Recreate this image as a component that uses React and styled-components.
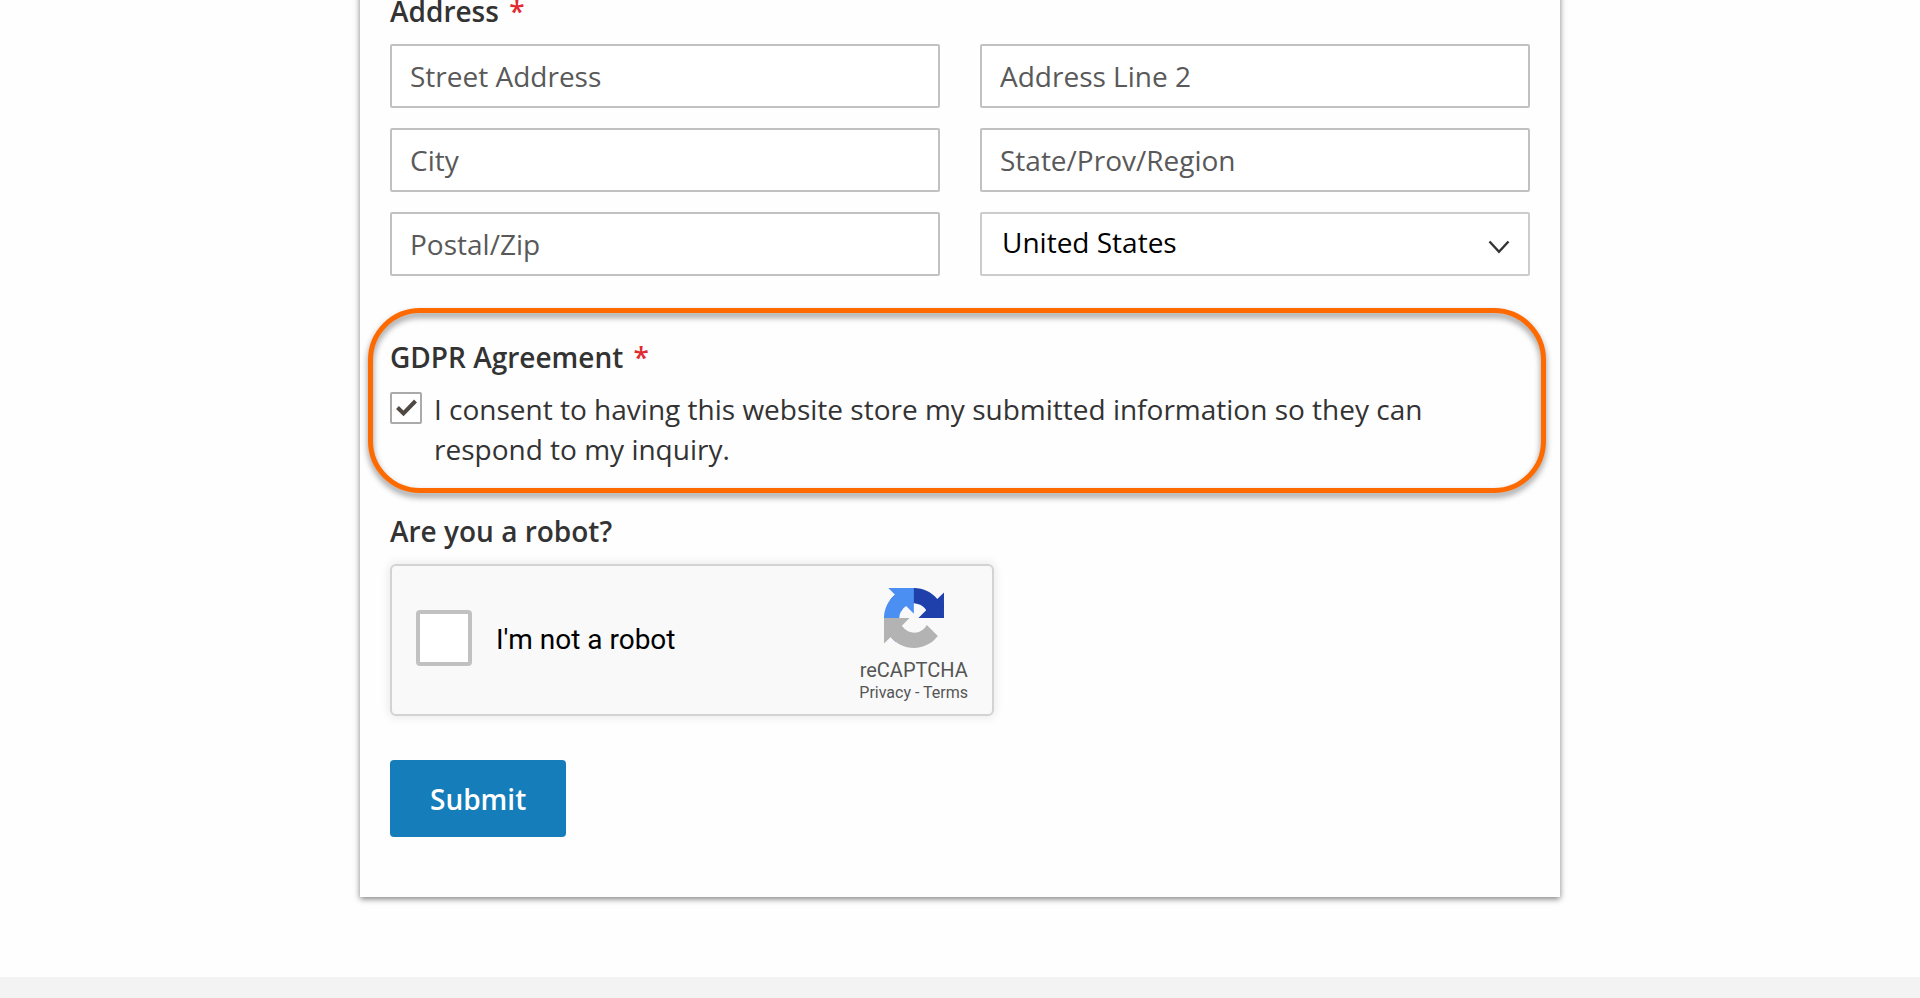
import React, { useState } from 'react';
import styled, { createGlobalStyle } from 'styled-components';

const FIELDS = [
  { name: 'street', placeholder: 'Street Address' },
  { name: 'line2', placeholder: 'Address Line 2' },
  { name: 'city', placeholder: 'City' },
  { name: 'region', placeholder: 'State/Prov/Region' },
  { name: 'zip', placeholder: 'Postal/Zip' },
];

const COUNTRIES = ['United States', 'Canada', 'United Kingdom', 'Australia'];

const AddressFields = () => {
  const [country, setCountry] = useState('United States');

  return (
    <Group>
      <Legend>
        Address <Required>*</Required>
      </Legend>
      <FieldGrid>
        {FIELDS.map(({ name, placeholder }) => (
          <TextInput
            key={name}
            type="text"
            name={name}
            placeholder={placeholder}
            aria-label={placeholder}
          />
        ))}
        <SelectWrap>
          <Select
            name="country"
            aria-label="Country"
            value={country}
            onChange={(e) => setCountry(e.target.value)}>
            {COUNTRIES.map((c) => (
              <option key={c}>{c}</option>
            ))}
          </Select>
          <Chevron viewBox="0 0 22 14" aria-hidden="true">
            <path d="M1.5 1.5 L11 11.8 L20.5 1.5" />
          </Chevron>
        </SelectWrap>
      </FieldGrid>
    </Group>
  );
};

const Consent = () => {
  const [checked, setChecked] = useState(true);

  return (
    <Callout>
      <Group>
        <Legend $gap={12}>
          GDPR Agreement <Required>*</Required>
        </Legend>
        <ConsentLabel>
          <CheckWrap>
            <Checkbox
              type="checkbox"
              name="consent"
              checked={checked}
              onChange={(e) => setChecked(e.target.checked)}
            />
            {checked && (
              <Tick viewBox="0 0 32 32" aria-hidden="true">
                <path d="M7.5 15.5 L13.5 21.5 L25.5 9" />
              </Tick>
            )}
          </CheckWrap>
          <span>
            I consent to having this website store my submitted information so
            they can respond to my inquiry.
          </span>
        </ConsentLabel>
      </Group>
    </Callout>
  );
};

const RecaptchaLogo = () => (
  <LogoSvg viewBox="0 0 64 64" aria-hidden="true">
    <path
      fill="#1f3fab"
      d="M64 31.955l-.033-1.37V4.687l-7.16 7.16C50.948 4.674 42.033.093 32.05.093c-10.4 0-19.622 4.96-25.458 12.64l11.736 11.86a15.55 15.55 0 0 1 4.754-5.334c2.05-1.6 4.952-2.906 8.968-2.906.485 0 .86.057 1.135.163 4.976.393 9.288 3.14 11.828 7.124l-8.307 8.307L64 31.953"
    />
    <path
      fill="#4c8ff3"
      d="M31.862.094l-1.37.033H4.594l7.16 7.16C4.58 13.147 0 22.06 0 32.046c0 10.4 4.96 19.622 12.64 25.458L24.5 45.768a15.55 15.55 0 0 1-5.334-4.754c-1.6-2.05-2.906-4.952-2.906-8.968 0-.485.057-.86.163-1.135.393-4.976 3.14-9.288 7.124-11.828l8.307 8.307L31.86.095"
    />
    <path
      fill="#b3b3b3"
      d="M.001 32.045l.033 1.37v25.898l7.16-7.16c5.86 7.173 14.774 11.754 24.76 11.754 10.4 0 19.622-4.96 25.458-12.64l-11.736-11.86a15.55 15.55 0 0 1-4.754 5.334c-2.05 1.6-4.952 2.906-8.968 2.906-.485 0-.86-.057-1.135-.163-4.976-.393-9.288-3.14-11.828-7.124l8.307-8.307c-10.522.04-22.4.066-27.295-.005"
    />
  </LogoSvg>
);

const Recaptcha = () => (
  <Group>
    <Legend>Are you a robot?</Legend>
    <CaptchaBox>
      <CaptchaLabel>
        <CaptchaCheckbox type="checkbox" name="captcha" />
        <span>I'm not a robot</span>
      </CaptchaLabel>
      <Brand>
        <RecaptchaLogo />
        <BrandName>reCAPTCHA</BrandName>
        <BrandLinks>
          <a href="#privacy">Privacy</a> - <a href="#terms">Terms</a>
        </BrandLinks>
      </Brand>
    </CaptchaBox>
  </Group>
);

const App = () => (
  <Page>
    <GlobalStyle />
    <Main>
      <Form onSubmit={(e) => e.preventDefault()}>
        <AddressFields />
        <Consent />
        <Recaptcha />
        <SubmitButton type="submit">Submit</SubmitButton>
      </Form>
    </Main>
    <Footer />
  </Page>
);

export default App;

const GlobalStyle = createGlobalStyle`
  *, *::before, *::after {
    box-sizing: border-box;
  }
  body {
    margin: 0;
    background: #fefefe;
    color: #333;
    font-family: 'Open Sans', 'Noto Sans', sans-serif;
    font-size: 28px;
    line-height: 40px;
  }
`;

const Page = styled.div`
  display: flex;
  flex-direction: column;
  min-height: 100vh;
  overflow: hidden;
`;

const Main = styled.main`
  padding: 0 20px 80px;
`;

const Footer = styled.footer`
  flex: 1;
  min-height: 20px;
  background: #f3f3f3;
`;

const Form = styled.form`
  max-width: 1200px;
  margin: -40px auto 0;
  padding: 31px 30px 60px;
  background: #fefefe;
  box-shadow: 0 2px 6px rgba(0, 0, 0, 0.5);
`;

const Group = styled.fieldset`
  min-width: 0;
  margin: 0 0 44px;
  padding: 0;
  border: none;

  &:first-child {
    margin-bottom: 61px;
  }
`;

/* orange ring drawn over the form, a bit wider than the group inside */
const Callout = styled.div`
  position: relative;
  margin-bottom: 42px;

  ${Group} {
    margin: 0;
  }

  &::after {
    content: '';
    position: absolute;
    top: -29px;
    right: -16px;
    bottom: -24px;
    left: -22px;
    border: 5px solid #ff6a00;
    border-radius: 52px;
    filter: drop-shadow(0 4px 3px rgba(0, 0, 0, 0.45));
    pointer-events: none;
  }
`;

const Legend = styled.legend`
  display: block;
  margin-bottom: ${({ $gap = 13 }) => $gap}px;
  padding: 0;
  font-weight: 600;
`;

const Required = styled.span`
  margin-left: 3px;
  color: #e02b32;
`;

const FieldGrid = styled.div`
  display: grid;
  grid-template-columns: repeat(2, minmax(0, 1fr));
  gap: 20px 40px;
`;

const TextInput = styled.input`
  width: 100%;
  height: 64px;
  padding: 0 18px;
  border: 2px solid #c1c1c1;
  border-radius: 2px;
  background: #fff;
  color: #333;
  font: inherit;
  &::placeholder {
    color: #595959;
    opacity: 1;
  }
`;

const SelectWrap = styled.div`
  position: relative;
`;

const Select = styled.select`
  display: block;
  width: 100%;
  height: 64px;
  padding: 0 60px 4px 20px;
  appearance: none;
  border: 2px solid #ccc;
  border-radius: 2px;
  background: #fff;
  color: #000;
  font: inherit;
`;

const Chevron = styled.svg`
  position: absolute;
  top: 28px;
  right: 20px;
  width: 22px;
  height: 14px;
  fill: none;
  stroke: #333;
  stroke-width: 2.4;
  pointer-events: none;
`;

const ConsentLabel = styled.label`
  display: flex;
  gap: 12px;
  padding-right: 90px;
`;

const CheckWrap = styled.span`
  position: relative;
  flex: none;
  width: 32px;
  height: 32px;
  margin-top: 3px;
`;

const Checkbox = styled.input`
  display: block;
  width: 32px;
  height: 32px;
  margin: 0;
  appearance: none;
  border: 2px solid #aaa;
  border-radius: 2px;
  background: #fff;
`;

const Tick = styled.svg`
  position: absolute;
  inset: 0;
  fill: none;
  stroke: #4f4843;
  stroke-width: 4;
  pointer-events: none;
`;

const CaptchaBox = styled.div`
  display: flex;
  justify-content: space-between;
  width: 604px;
  max-width: 100%;
  height: 152px;
  padding: 0 24px;
  border: 2px solid #d3d3d3;
  border-radius: 6px;
  background: #f9f9f9;
  box-shadow: 0 0 8px 2px rgba(0, 0, 0, 0.08);
  color: #000;
  font-family: Roboto, 'Liberation Sans', sans-serif;
`;

const CaptchaLabel = styled.label`
  display: flex;
  align-items: center;
  gap: 24px;
`;

const CaptchaCheckbox = styled.input`
  width: 56px;
  height: 56px;
  margin: 0 0 4px;
  appearance: none;
  border: 4px solid #c1c1c1;
  border-radius: 4px;
  background: #fff;
`;

const Brand = styled.div`
  display: flex;
  flex-direction: column;
  align-items: center;
  padding-top: 22px;
  color: #555;
`;

const LogoSvg = styled.svg`
  width: 60px;
  height: 60px;
  margin-bottom: 10px;
`;

const BrandName = styled.div`
  font-size: 20px;
  line-height: 24px;
`;

const BrandLinks = styled.div`
  font-size: 16px;
  line-height: 22px;
  a {
    color: inherit;
    text-decoration: none;
  }
`;

const SubmitButton = styled.button`
  display: block;
  height: 77px;
  padding: 0 40px;
  border: none;
  border-radius: 4px;
  background: #157dba;
  color: #fff;
  font: inherit;
  font-weight: 600;
  cursor: pointer;
`;
